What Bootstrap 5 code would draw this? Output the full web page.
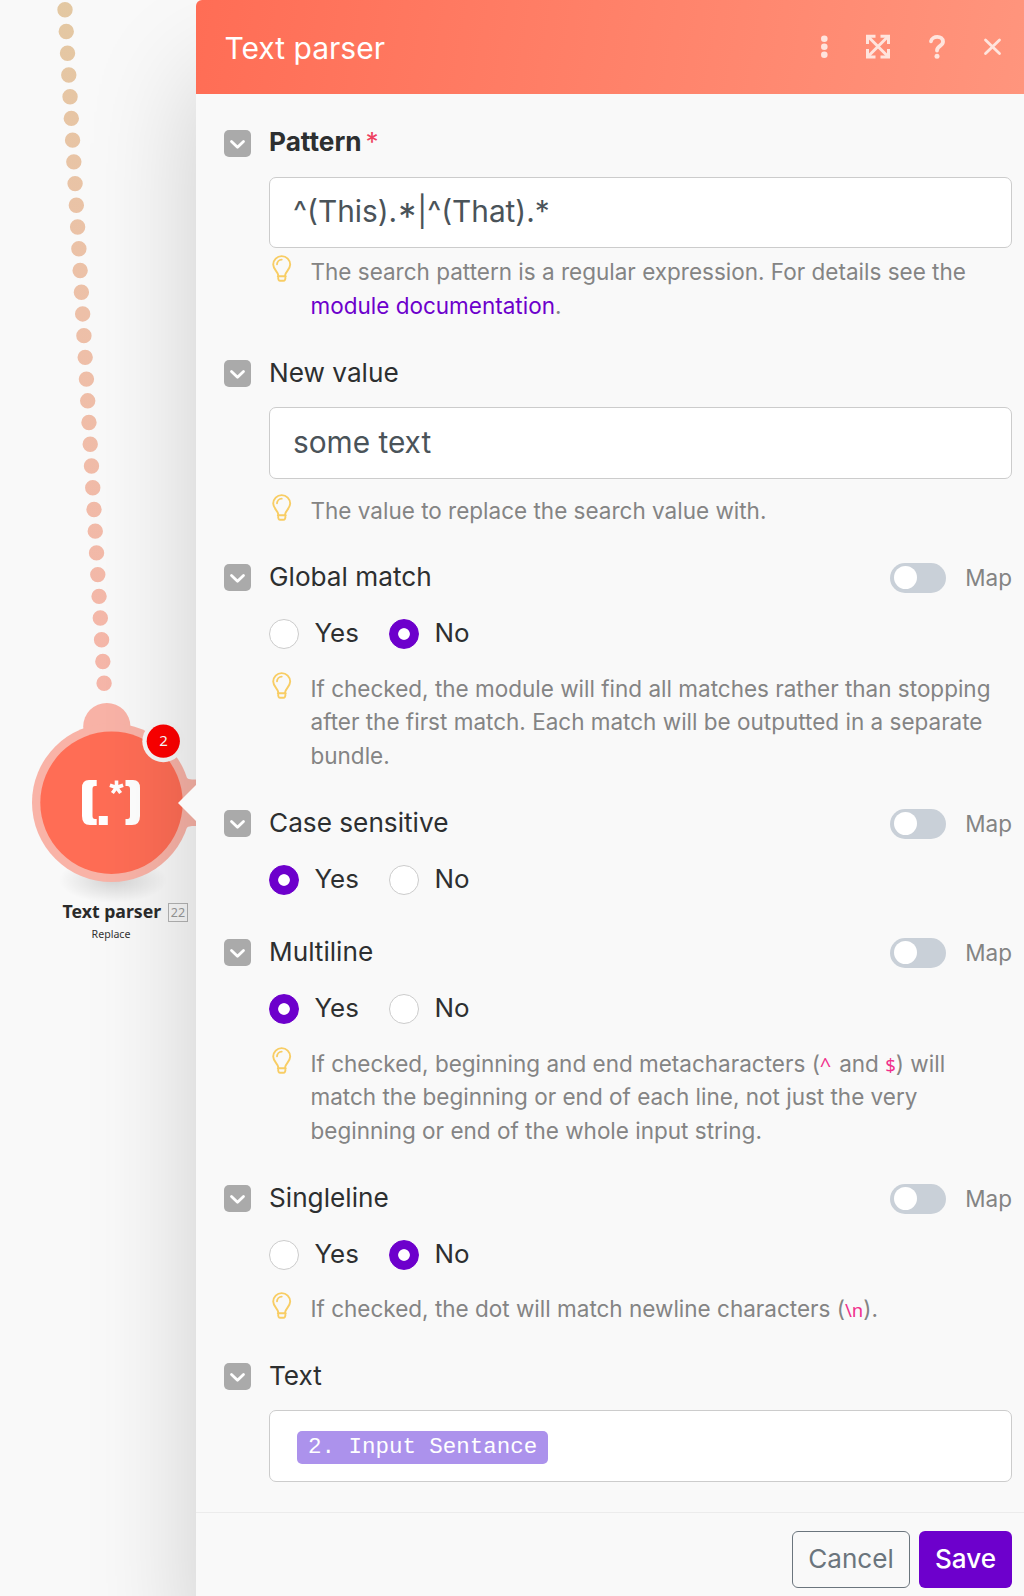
<!DOCTYPE html>
<html lang="en">
<head>
<meta charset="utf-8">
<meta name="viewport" content="width=device-width, initial-scale=1">
<title>Text parser</title>
<link href="https://cdn.jsdelivr.net/npm/bootstrap@5.3.0/dist/css/bootstrap.min.css" rel="stylesheet">
<style>
body{font-family:Inter,"Liberation Sans",sans-serif;background:#f9f9f9;color:#2d2f30;width:1024px;height:1596px;overflow:hidden}
.stage{height:1596px}
.flow-canvas{width:196px;flex:none}
.flow-art{left:0;top:0}
.node-name{left:62.5px;top:899px;font:700 17.7px/24px "Noto Sans","Open Sans",sans-serif;white-space:nowrap;color:#2b2b2b}
.node-id{left:168px;top:903px;width:20px;height:19px;border:1px solid #b4b4b4;font:12.5px/17px "Noto Sans",sans-serif;color:#999}
.node-sub{left:62px;top:926px;width:98px;font:10.6px/16px "Noto Sans",sans-serif;color:#333}
.node-count{left:147px;top:724px;width:33px;height:33px;font:15px/32px "Noto Sans",sans-serif;color:#fff}
.panel{width:828px;background:#f9f9f9;border-top-left-radius:6px;box-shadow:0 75px 110px rgba(0,0,0,.18)}
.panel-head{height:94px;padding:0 10px 0 28.5px;background:linear-gradient(100deg,#ff6d55,#ff957d);border-top-left-radius:6px;color:#fff}
.panel-title{font-size:30px;font-weight:400;padding-top:2px}
.head-icons{color:#ffe4dd}
.panel-body{padding:35px 12px 0 28px}
.field{margin-bottom:37px}
.field-row{height:28px}
.chev{width:27px;height:27px;margin-right:18px;flex:none}
.field-name{font-size:26.2px;line-height:28px}
.name-required{padding-bottom:2px}
.star{color:#ee4160;font-weight:400;margin-left:4px}
.field-body{margin-left:45px}
.field-input{height:72px;margin-top:19.5px;border:1px solid #ccc;border-radius:7px;background:#fff;padding:0 23px;font-size:29.8px;color:#4a5359}
.input-pattern{height:71px}
.pattern-text{padding-bottom:1px}
.low-star{font-size:36px;line-height:1;position:relative;top:7px;margin:0 1px}
.hint{font-size:22.5px;line-height:33.5px;color:#848484;margin-top:23px}
.hint-near{margin-top:7.5px}
.hint-mid{margin-top:15px}
.bulb{width:20px;height:27px;margin:0 18.5px 0 3px;flex:none}
.hint a{color:#6d00cc;text-decoration:none}
.hint code{font:18.5px/1 "Noto Sans",sans-serif;color:#f0308c}
.hint .code-caret{font-size:20px;letter-spacing:1.5px}
.choices{height:30px;margin-top:27.5px;font-size:25.9px}
.choice{width:120px}
.choices .form-check-input{width:30px;height:30px;margin:0 15.5px 0 0;border:1px solid #ccc;background-color:#fff;flex:none}
.choices .form-check-input:checked{background:radial-gradient(circle,#fff 5.4px,#6d00cc 6.2px);border-color:#6d00cc}
.map-switch{width:56px;height:30px;border-radius:15px;background:#c9d0d8;padding:0 4px;margin:1px 19px 0 0}
.knob{width:23px;height:23px;border-radius:50%;background:#fff}
.map-label{font-size:22.5px;color:#848484;padding-top:1px}
.chip{font:22.48px/31px "Liberation Mono",monospace;background:#ac92ec;color:#fff;border-radius:5px;padding:1px 11px;height:33px;margin:4px 0 0 4px}
.panel-foot{margin-top:30px;border-top:1px solid #ececec;padding:18px 12px 0 0;gap:9px}
.panel-foot .btn{height:57px;font-size:26.1px;border-radius:6px;padding:0}
.btn-cancel{width:118px;border:1px solid #6b757d;color:#6b757d}
.btn-save{width:93px;background:#6d00cc;color:#fff;font-weight:500}
</style>
<script src="https://cdn.jsdelivr.net/npm/bootstrap@5.3.0/dist/js/bootstrap.bundle.min.js"></script>
</head>
<body>
<svg width="0" height="0" class="position-absolute">
  <symbol id="chev" viewBox="0 0 27 27"><rect width="27" height="27" rx="5" fill="#aaa"/><path d="M7.5 11.5 13.5 17.3 19.5 11.5" fill="none" stroke="#fff" stroke-width="2.8" stroke-linecap="round" stroke-linejoin="round"/></symbol>
  <symbol id="bulb" viewBox="0 0 20 27"><g fill="none" stroke="#f8cd64" stroke-width="1.9" stroke-linecap="round" stroke-linejoin="round"><path d="M6.3 20.4C6 16.8 1.2 14.3 1.2 9.6a8.5 8.5 0 0 1 17 0c0 4.7-4.8 7.2-5.1 10.8M5.8 21.2h8M6.1 21.5c0 2.6.8 4.3 2 4.3h3.4c1.2 0 2-1.7 2-4.3M5 9.3A5 5 0 0 1 9.7 4.6"/></g></symbol>
</svg>
<div class="stage d-flex position-relative">
  <aside class="flow-canvas">
    <svg class="flow-art position-absolute" width="196" height="960" viewBox="0 0 196 960">
      <defs>
        <linearGradient id="trail" gradientUnits="userSpaceOnUse" x1="0" y1="0" x2="0" y2="690"><stop offset="0" stop-color="#e3c8a2"/><stop offset=".45" stop-color="#edc0a8"/><stop offset="1" stop-color="#f6b6a9"/></linearGradient>
        <radialGradient id="ground"><stop offset="0" stop-color="#000" stop-opacity=".15"/><stop offset="1" stop-color="#000" stop-opacity="0"/></radialGradient>
      </defs>
      <path d="M65 9.8 104.1 683.3" stroke="url(#trail)" stroke-width="15.4" stroke-linecap="round" stroke-dasharray="0 21.76" fill="none"/>
      <ellipse cx="113" cy="880" rx="54" ry="23" fill="url(#ground)"/>
      <g fill="#f9b3a7"><circle cx="106.8" cy="726.5" r="23.6"/><circle cx="111.5" cy="802.6" r="79.5"/><path d="M180 768Q184 779.5 192 779.5H196V826H192Q184 826 180 838Z"/></g>
      <circle cx="111.5" cy="802.7" r="71.2" fill="#ff6d55"/>
      <g fill="#fff">
        <path d="M96.7 780H89Q82 780 82 788V816Q82 825 90 825H96.7V819H95Q92.5 819 92.5 816V789Q92.5 786 95 786H96.7Z"/>
        <path d="M125.5 780H133Q140 780 140 788V816Q140 825 132 825H125.5V819H127.5Q130 819 130 816V789Q130 786 127.5 786H125.5Z"/>
        <path d="M98.8 816h9v9h-9z"/>
      </g>
      <path d="M116.5 787.5V780.5M116.5 787.5 109.9 785.3M116.5 787.5 123.1 785.3M116.5 787.5 112.4 793M116.5 787.5 120.6 793" stroke="#fff" stroke-width="3.6"/>
      <circle cx="163.3" cy="741.2" r="21" fill="#f8f8f8"/><circle cx="163.3" cy="741.2" r="16.6" fill="#ff0000"/>
    </svg>
    <span class="node-count position-absolute text-center">2</span>
    <span class="node-name position-absolute">Text parser</span>
    <span class="node-id position-absolute text-center">22</span>
    <span class="node-sub position-absolute text-center">Replace</span>
  </aside>
  <main class="panel position-relative">
    <svg class="position-absolute" style="left:-18px;top:785px" width="18" height="36"><path d="M18 0 0 18 18 36Z" fill="#f9f9f9"/></svg>
    <header class="panel-head d-flex align-items-center justify-content-between">
      <h1 class="panel-title mb-0">Text parser</h1>
      <svg class="head-icons" width="210" height="30" viewBox="804 31.5 210 30" fill="none" stroke="currentColor" stroke-linecap="round" stroke-linejoin="round">
        <g fill="currentColor" stroke="none"><circle cx="824.3" cy="38.2" r="3.3"/><circle cx="824.3" cy="46.2" r="3.3"/><circle cx="824.3" cy="54.3" r="3.3"/></g>
        <g stroke-width="3" stroke-linecap="butt" stroke-linejoin="miter"><path d="M868 36 888 56M888 36 868 56"/><path d="M867.5 43.5V35.7H875.5M880.5 35.7H888.5V43.5M888.5 48.5V56.5H880.5M875.5 56.5H867.5V48.5"/></g>
        <path stroke-width="3.8" d="M931 40.8C932 35 943 34.8 943 41.2 943 45.5 937 45.2 937 50"/><circle cx="937" cy="55.7" r="2.5" fill="currentColor" stroke="none"/>
        <path stroke-width="2.8" d="M985.5 39.5 999.5 53M999.5 39.5 985.5 53"/>
      </svg>
    </header>
    <form class="panel-body">
      <section class="field">
        <div class="field-row d-flex align-items-center"><svg class="chev"><use href="#chev"/></svg><label class="field-name name-required fw-bold">Pattern<span class="star">*</span></label></div>
        <div class="field-body">
          <div class="field-input input-pattern d-flex align-items-center"><span class="pattern-text">^(This).<span class="low-star">*</span>|^(That).*</span></div>
          <div class="hint hint-near d-flex"><svg class="bulb"><use href="#bulb"/></svg><div>The search pattern is a regular expression. For details see the<br><a href="#">module documentation</a>.</div></div>
        </div>
      </section>
      <section class="field" style="margin-bottom:36px">
        <div class="field-row d-flex align-items-center"><svg class="chev"><use href="#chev"/></svg><label class="field-name">New value</label></div>
        <div class="field-body">
          <div class="field-input d-flex align-items-center">some text</div>
          <div class="hint hint-mid d-flex"><svg class="bulb"><use href="#bulb"/></svg><div>The value to replace the search value with.</div></div>
        </div>
      </section>
      <section class="field">
        <div class="field-row d-flex align-items-center"><svg class="chev"><use href="#chev"/></svg><label class="field-name me-auto">Global match</label><span class="map-switch d-flex align-items-center"><span class="knob"></span></span><span class="map-label">Map</span></div>
        <div class="field-body">
          <div class="choices d-flex"><label class="choice d-flex align-items-center"><input class="form-check-input" type="radio" name="g">Yes</label><label class="choice d-flex align-items-center"><input class="form-check-input" type="radio" name="g" checked>No</label></div>
          <div class="hint d-flex"><svg class="bulb"><use href="#bulb"/></svg><div>If checked, the module will find all matches rather than stopping<br>after the first match. Each match will be outputted in a separate<br>bundle.</div></div>
        </div>
      </section>
      <section class="field" style="margin-bottom:43.5px">
        <div class="field-row d-flex align-items-center"><svg class="chev"><use href="#chev"/></svg><label class="field-name me-auto">Case sensitive</label><span class="map-switch d-flex align-items-center"><span class="knob"></span></span><span class="map-label">Map</span></div>
        <div class="field-body">
          <div class="choices d-flex"><label class="choice d-flex align-items-center"><input class="form-check-input" type="radio" name="c" checked>Yes</label><label class="choice d-flex align-items-center"><input class="form-check-input" type="radio" name="c">No</label></div>
        </div>
      </section>
      <section class="field">
        <div class="field-row d-flex align-items-center"><svg class="chev"><use href="#chev"/></svg><label class="field-name me-auto">Multiline</label><span class="map-switch d-flex align-items-center"><span class="knob"></span></span><span class="map-label">Map</span></div>
        <div class="field-body">
          <div class="choices d-flex"><label class="choice d-flex align-items-center"><input class="form-check-input" type="radio" name="m" checked>Yes</label><label class="choice d-flex align-items-center"><input class="form-check-input" type="radio" name="m">No</label></div>
          <div class="hint d-flex"><svg class="bulb"><use href="#bulb"/></svg><div>If checked, beginning and end metacharacters (<code class="code-caret">^</code> and <code>$</code>) will<br>match the beginning or end of each line, not just the very<br>beginning or end of the whole input string.</div></div>
        </div>
      </section>
      <section class="field">
        <div class="field-row d-flex align-items-center"><svg class="chev"><use href="#chev"/></svg><label class="field-name me-auto">Singleline</label><span class="map-switch d-flex align-items-center"><span class="knob"></span></span><span class="map-label">Map</span></div>
        <div class="field-body">
          <div class="choices d-flex"><label class="choice d-flex align-items-center"><input class="form-check-input" type="radio" name="s">Yes</label><label class="choice d-flex align-items-center"><input class="form-check-input" type="radio" name="s" checked>No</label></div>
          <div class="hint d-flex" style="margin-top:22px"><svg class="bulb"><use href="#bulb"/></svg><div>If checked, the dot will match newline characters (<code>\n</code>).</div></div>
        </div>
      </section>
      <section class="field mb-0">
        <div class="field-row d-flex align-items-center"><svg class="chev"><use href="#chev"/></svg><label class="field-name">Text</label></div>
        <div class="field-body">
          <div class="field-input d-flex align-items-center"><span class="chip">2. Input Sentance</span></div>
        </div>
      </section>
    </form>
    <footer class="panel-foot d-flex justify-content-end"><button class="btn btn-cancel">Cancel</button><button class="btn btn-save">Save</button></footer>
  </main>
</div>
</body>
</html>
